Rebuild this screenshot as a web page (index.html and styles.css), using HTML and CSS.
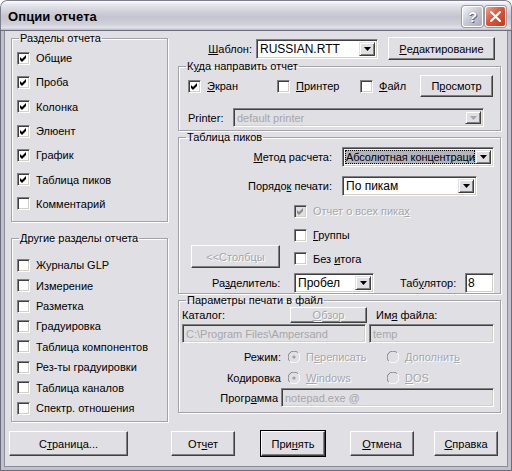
FILE: index.html
```html
<!DOCTYPE html>
<html>
<head>
<meta charset="utf-8">
<link rel="stylesheet" href="styles.css">
</head>
<body>
<div class="window">
  <div class="titlebar">
    <span class="title">Опции отчета</span>
    <div class="tb-btns">
      <span class="tb-btn help">?</span>
      <span class="tb-btn close"><svg width="11" height="11" viewBox="0 0 11 11"><path d="M1 1 L10 10 M10 1 L1 10" stroke="#fff" stroke-width="2.2" stroke-linecap="square"/></svg></span>
    </div>
  </div>
  <div class="client">
    <div class="cols">
      <div class="left">
        <fieldset class="grp g1">
          <legend>Разделы отчета</legend>
          <div class="gbody">
            <div class="crow"><span class="cb on"><svg viewBox="0 0 7 7"><path d="M0 2 L2 4 L6 0 L6 3 L2 7 L0 5 Z"/></svg></span><span>Общие</span></div>
            <div class="crow"><span class="cb on"><svg viewBox="0 0 7 7"><path d="M0 2 L2 4 L6 0 L6 3 L2 7 L0 5 Z"/></svg></span><span>Проба</span></div>
            <div class="crow"><span class="cb on"><svg viewBox="0 0 7 7"><path d="M0 2 L2 4 L6 0 L6 3 L2 7 L0 5 Z"/></svg></span><span>Колонка</span></div>
            <div class="crow"><span class="cb on"><svg viewBox="0 0 7 7"><path d="M0 2 L2 4 L6 0 L6 3 L2 7 L0 5 Z"/></svg></span><span>Элюент</span></div>
            <div class="crow"><span class="cb on"><svg viewBox="0 0 7 7"><path d="M0 2 L2 4 L6 0 L6 3 L2 7 L0 5 Z"/></svg></span><span>График</span></div>
            <div class="crow"><span class="cb on"><svg viewBox="0 0 7 7"><path d="M0 2 L2 4 L6 0 L6 3 L2 7 L0 5 Z"/></svg></span><span>Таблица пиков</span></div>
            <div class="crow"><span class="cb"></span><span>Комментарий</span></div>
          </div>
        </fieldset>
        <fieldset class="grp g2">
          <legend>Другие разделы отчета</legend>
          <div class="gbody">
            <div class="crow"><span class="cb"></span><span>Журналы GLP</span></div>
            <div class="crow"><span class="cb"></span><span>Измерение</span></div>
            <div class="crow"><span class="cb"></span><span>Разметка</span></div>
            <div class="crow"><span class="cb"></span><span>Градуировка</span></div>
            <div class="crow"><span class="cb"></span><span>Таблица компонентов</span></div>
            <div class="crow"><span class="cb"></span><span>Рез-ты градуировки</span></div>
            <div class="crow"><span class="cb"></span><span>Таблица каналов</span></div>
            <div class="crow"><span class="cb"></span><span>Спектр. отношения</span></div>
          </div>
        </fieldset>
      </div>
      <div class="right">
        <div class="tplrow">
          <span class="lbl"><u>Ш</u>аблон:</span>
          <div class="combo tpl"><span class="ctext">RUSSIAN.RTT</span><span class="dd"><svg viewBox="0 0 7 4"><path d="M0 0 H7 L3.5 4 Z"/></svg></span></div>
          <span class="btn edit"><u>Р</u>едактирование</span>
        </div>
        <fieldset class="grp dest">
          <legend>К<u>у</u>да направить отчет</legend>
          <div class="gbody">
            <div class="drow">
              <div class="opt o1"><span class="cb on"><svg viewBox="0 0 7 7"><path d="M0 2 L2 4 L6 0 L6 3 L2 7 L0 5 Z"/></svg></span><span><u>Э</u>кран</span></div>
              <div class="opt o2"><span class="cb"></span><span><u>П</u>ринтер</span></div>
              <div class="opt o3"><span class="cb"></span><span><u>Ф</u>айл</span></div>
              <span class="btn view">П<u>р</u>осмотр</span>
            </div>
            <div class="prrow">
              <span class="lbl">Printer:</span>
              <div class="combo dis printer"><span class="ctext">default printer</span><span class="dd"><svg viewBox="0 0 7 4"><path d="M0 0 H7 L3.5 4 Z"/></svg></span></div>
            </div>
          </div>
        </fieldset>
        <fieldset class="grp peaks">
          <legend>Таблица пиков</legend>
          <div class="gbody">
            <div class="pkrow r1">
              <span class="plbl"><u>М</u>етод расчета:</span>
              <div class="combo method"><span class="ctext"><span class="sel">Абсолютная концентраци</span></span><span class="dd"><svg viewBox="0 0 7 4"><path d="M0 0 H7 L3.5 4 Z"/></svg></span></div>
            </div>
            <div class="pkrow r2">
              <span class="plbl">Порядо<u>к</u> печати:</span>
              <div class="combo order"><span class="ctext">По пикам</span><span class="dd"><svg viewBox="0 0 7 4"><path d="M0 0 H7 L3.5 4 Z"/></svg></span></div>
            </div>
            <div class="pkchecks">
              <div class="opt c1"><span class="cb dis on"><svg viewBox="0 0 7 7"><path d="M0 2 L2 4 L6 0 L6 3 L2 7 L0 5 Z"/></svg></span><span class="distext">Отчет о всех пика<u>х</u></span></div>
              <div class="opt c2"><span class="cb"></span><span><u>Г</u>руппы</span></div>
              <span class="btn cols-btn distext">&lt;&lt;Столбцы</span>
              <div class="opt c3"><span class="cb"></span><span>Без <u>и</u>тога</span></div>
            </div>
            <div class="pkrow r6">
              <span class="seplbl">Ра<u>з</u>делитель:</span>
              <div class="combo sep"><span class="ctext">Пробел</span><span class="dd"><svg viewBox="0 0 7 4"><path d="M0 0 H7 L3.5 4 Z"/></svg></span></div>
              <span class="tablbl">Таб<u>у</u>лятор:</span>
              <div class="edit tab">8</div>
            </div>
          </div>
        </fieldset>
        <fieldset class="grp fileprm">
          <legend>Параметры печати в файл</legend>
          <div class="gbody">
            <div class="fr1">
              <span class="catlbl">Каталог:</span>
              <span class="btn browse distext"><u>О</u>бзор</span>
              <span class="namelbl">Им<u>я</u> файла:</span>
            </div>
            <div class="fr2">
              <div class="edit dis path">C:\Program Files\Ampersand</div>
              <div class="edit dis fname">temp</div>
            </div>
            <div class="fr3">
              <span class="rlbl">Режим:</span>
              <div class="ropt"><span class="rb on"><svg viewBox="0 0 12 12"><path d="M10.2 1.8 A5.6 5.6 0 0 0 1.8 10.2" fill="none" stroke="#808080"/><path d="M1.8 10.2 A5.6 5.6 0 0 0 10.2 1.8" fill="none" stroke="#fff"/><circle cx="6" cy="6" r="4.6" fill="#e0dfe3"/><circle cx="6" cy="6" r="1.6" fill="#a0a0a0"/></svg></span><span class="distext">П<u>е</u>реписать</span></div>
              <div class="ropt"><span class="rb"><svg viewBox="0 0 12 12"><path d="M10.2 1.8 A5.6 5.6 0 0 0 1.8 10.2" fill="none" stroke="#808080"/><path d="M1.8 10.2 A5.6 5.6 0 0 0 10.2 1.8" fill="none" stroke="#fff"/><circle cx="6" cy="6" r="4.6" fill="#e0dfe3"/></svg></span><span class="distext">Дополнит<u>ь</u></span></div>
            </div>
            <div class="fr3 fr4">
              <span class="rlbl">Кодировка</span>
              <div class="ropt"><span class="rb on"><svg viewBox="0 0 12 12"><path d="M10.2 1.8 A5.6 5.6 0 0 0 1.8 10.2" fill="none" stroke="#808080"/><path d="M1.8 10.2 A5.6 5.6 0 0 0 10.2 1.8" fill="none" stroke="#fff"/><circle cx="6" cy="6" r="4.6" fill="#e0dfe3"/><circle cx="6" cy="6" r="1.6" fill="#a0a0a0"/></svg></span><span class="distext"><u>W</u>indows</span></div>
              <div class="ropt"><span class="rb"><svg viewBox="0 0 12 12"><path d="M10.2 1.8 A5.6 5.6 0 0 0 1.8 10.2" fill="none" stroke="#808080"/><path d="M1.8 10.2 A5.6 5.6 0 0 0 10.2 1.8" fill="none" stroke="#fff"/><circle cx="6" cy="6" r="4.6" fill="#e0dfe3"/></svg></span><span class="distext"><u>D</u>OS</span></div>
            </div>
            <div class="fr5">
              <span class="proglbl">Прогр<u>а</u>мма</span>
              <div class="edit dis prog">notepad.exe @</div>
            </div>
          </div>
        </fieldset>
      </div>
    </div>
    <div class="btnrow">
      <span class="btn b-page">С<u>т</u>раница...</span>
      <span class="btn b-rep">От<u>ч</u>ет</span>
      <span class="btn b-ok def">При<u>н</u>ять</span>
      <span class="btn b-cancel"><u>О</u>тмена</span>
      <span class="btn b-help"><u>С</u>правка</span>
    </div>
  </div>
</div>
</body>
</html>
```
FILE: styles.css
```css
html, body {
  margin: 0;
  padding: 0;
  width: 512px;
  height: 471px;
  overflow: hidden;
  background: #fff;
}
body {
  font-family: "Liberation Sans", Arial, sans-serif;
  font-size: 11px;
  color: #000;
}
u { text-decoration: underline; text-underline-offset: 1px; }

.window {
  width: 512px;
  height: 471px;
  display: flex;
  flex-direction: column;
  box-sizing: border-box;
  border-radius: 7px 7px 0 0;
  overflow: hidden;
  background: #e0dfe3;
}
.titlebar {
  height: 30px;
  flex: none;
  display: flex;
  align-items: center;
  justify-content: space-between;
  padding: 0 5px 0 7px;
  background: linear-gradient(#ffffff 0%, #e6e6ee 12%, #d2d2dc 35%, #c4c4d0 55%, #cfd0da 80%, #e2e2ea 92%, #b9b9c6 100%);
  border: 1px solid #7e7e8c;
  border-bottom: none;
  border-radius: 7px 7px 0 0;
  box-sizing: border-box;
}
.title {
  font-weight: bold;
  font-size: 13px;
  color: #000;
  letter-spacing: 0.1px;
  margin-top: 1px;
}
.tb-btns { display: flex; gap: 2px; margin-top: 1px; }
.tb-btn {
  width: 21px;
  height: 21px;
  box-sizing: border-box;
  border-radius: 3px;
  border: 1px solid #fff;
  display: flex;
  align-items: center;
  justify-content: center;
  box-shadow: 0 0 0 1px #9a9aa8;
}
.help {
  background: linear-gradient(135deg, #f4f4f8, #c6c7d6 50%, #a7a9bd);
  color: #fff;
  font-weight: bold;
  font-size: 15px;
  text-shadow: 0 0 1px #55566a, 1px 1px 0 #6b6c80;
}
.close {
  background: linear-gradient(135deg, #f2a38f, #e0553a 45%, #c43a1c);
}
.close svg { width: 11px; height: 11px; display: block; }

.client {
  flex: 1;
  display: flex;
  flex-direction: column;
  border-style: solid;
  border-width: 0 4px 4px 4px;
  border-color: #bfc0cc;
  box-shadow: inset 1px 0 #8c8c9c, inset -1px 0 #8c8c9c, inset 0 -1px #8c8c9c;
  outline: 1px solid #6c6c7a;
  outline-offset: -1px;
  padding: 2px 0 0 5px;
}
.cols {
  display: flex;
  gap: 10px;
  margin-left: 2px;
}
.left {
  width: 157px;
  display: flex;
  flex-direction: column;
  gap: 10px;
}
.right {
  width: 323px;
  display: flex;
  flex-direction: column;
}

fieldset.grp {
  margin: 0;
  padding: 0;
  min-width: 0;
  border: 1px solid #a2a2a8;
  box-shadow: 1px 1px 0 #fff, inset 1px 1px 0 #fff;
}
fieldset.grp legend {
  padding: 0 1px;
  margin-left: 7px;
  line-height: 13px;
}
.gbody { display: flex; flex-direction: column; }

.g1 .gbody { padding: 1px 0 5px 5px; }
.g1 .crow { height: 24.3px; }
.g2 .gbody { padding: 10px 0 3px 5px; }
.g2 .crow { height: 20.4px; }
.crow {
  display: flex;
  align-items: center;
  gap: 6px;
}

.cb {
  width: 13px;
  height: 13px;
  box-sizing: border-box;
  flex: none;
  background: #fff;
  border: 1px solid;
  border-color: #808080 #fff #fff #808080;
  box-shadow: inset 1px 1px #404040, inset -1px -1px #d4d0c8;
  display: inline-block;
}
.cb svg { display: block; width: 7px; height: 7px; margin: 2px; fill: #000; }
.cb.dis { background: #e0dfe3; }
.cb.dis svg { fill: #8a8a8a; }

.distext { color: #a7a6aa; text-shadow: 1px 1px 0 #fff; }

.btn {
  box-sizing: border-box;
  display: flex;
  align-items: center;
  justify-content: center;
  background: #e0dfe3;
  border: 1px solid;
  border-color: #fff #404040 #404040 #fff;
  box-shadow: inset -1px -1px #808080;
  flex: none;
  white-space: nowrap;
}
.btn.def { outline: 1px solid #000; }

.combo, .edit {
  box-sizing: border-box;
  background: #fff;
  border: 1px solid;
  border-color: #808080 #fff #fff #808080;
  box-shadow: inset 1px 1px #404040, inset -1px -1px #d4d0c8;
  flex: none;
}
.combo {
  display: flex;
  align-items: stretch;
  padding: 2px;
}
.ctext {
  flex: 1;
  display: flex;
  align-items: center;
  padding-left: 1px;
  overflow: hidden;
  white-space: nowrap;
}
.dd {
  width: 16px;
  flex: none;
  box-sizing: border-box;
  background: #e0dfe3;
  border: 1px solid;
  border-color: #e0dfe3 #404040 #404040 #e0dfe3;
  box-shadow: inset 1px 1px #fff, inset -1px -1px #808080;
  display: flex;
  align-items: center;
  justify-content: center;
}
.dd svg { width: 7px; height: 4px; display: block; fill: #000; }
.combo.dis, .edit.dis { background: #e0dfe3; color: #a7a6aa; }
.combo.dis .dd svg { fill: #a7a6aa; }
.edit {
  display: flex;
  align-items: center;
  padding: 0 3px;
  white-space: nowrap;
  overflow: hidden;
}

/* template row */
.tplrow {
  margin-top: 5px;
  height: 23px;
  display: flex;
  align-items: center;
  justify-content: flex-end;
  padding-right: 6px;
}
.tplrow .lbl { margin-right: 4px; }
.combo.tpl { width: 122px; height: 20px; font-size: 12px; }
.btn.edit { width: 107px; height: 23px; margin-left: 10px; border-color: #fff #404040 #404040 #fff; background: #e0dfe3; box-shadow: inset -1px -1px #808080; padding: 0; }

/* dest */
.dest .gbody { padding: 2px 7px 3px 9px; }
.drow { display: flex; align-items: center; height: 22px; }
.opt { display: flex; align-items: center; gap: 6px; }
.dest .o1 { width: 89px; }
.dest .o2 { width: 83px; }
.dest .o3 { width: 60px; }
.btn.view { width: 73px; height: 22px; }
.prrow { display: flex; align-items: center; margin-top: 11px; }
.prrow .lbl { width: 54px; padding-left: 9px; box-sizing: border-box; margin-left: -9px; }
.combo.printer { width: 251px; height: 19px; margin-left: 0; }

/* peaks */
.peaks { margin-top: 2px; }
.peaks .gbody { padding: 3px 0 0 4px; }
.pkrow { display: flex; align-items: center; }
.plbl { width: 149px; text-align: right; margin-right: 10px; }
.combo.method { width: 152px; height: 20px; font-size: 11px; }
.combo.method .ctext { padding: 0; }
.sel {
  background: #b2b4bf;
  outline: 1px dotted #000;
  outline-offset: -1px;
  display: flex;
  align-items: center;
  height: 100%;
  padding-left: 1px;
  width: 100%;
  overflow: hidden;
  letter-spacing: -0.1px;
}
.pkrow.r2 { margin-top: 9px; }
.combo.order { width: 135px; height: 20px; font-size: 12px; }
.pkchecks {
  display: grid;
  grid-template-columns: 111px 1fr;
  grid-template-rows: 24px 24px 23px;
  margin-top: 3px;
}
.pkchecks .c1 { grid-column: 2; grid-row: 1; }
.pkchecks .c2 { grid-column: 2; grid-row: 2; }
.pkchecks .c3 { grid-column: 2; grid-row: 3; }
.btn.cols-btn {
  grid-column: 1;
  grid-row: 2 / 4;
  align-self: end;
  justify-self: start;
  margin-left: 8px;
  margin-bottom: 2px;
  width: 89px;
  height: 23px;
}
.pkrow.r6 { margin-top: 3px; height: 20px; }
.seplbl { width: 111px; padding-left: 29px; box-sizing: border-box; }
.combo.sep { width: 80px; height: 20px; font-size: 12px; }
.tablbl { margin-left: 26px; width: 65px; }
.edit.tab { width: 29px; height: 20px; font-size: 12px; padding-left: 2px; }

/* file params */
.fileprm { margin-top: 7px; }
.fileprm .gbody { padding: 0 0 5px 3px; }
.fr1 { display: flex; align-items: center; height: 16px; }
.catlbl { width: 108px; }
.btn.browse { width: 77px; height: 16px; }
.namelbl { margin-left: 9px; }
.fr2 { display: flex; gap: 3px; margin-top: 1px; }
.edit.path { width: 184px; height: 19px; }
.edit.fname { width: 125px; height: 19px; }
.fr3 { display: flex; align-items: center; height: 21px; margin-top: 3px; }
.fr4 { margin-top: 0; }
.rlbl { width: 99px; text-align: right; margin-right: 7px; }
.ropt { display: flex; align-items: center; gap: 6px; width: 99px; }
.rb { width: 12px; height: 12px; flex: none; }
.rb svg { display: block; width: 12px; height: 12px; }
.fr5 { display: flex; align-items: center; margin-top: 0; }
.proglbl { width: 96px; text-align: right; margin-right: 3px; }
.edit.prog { width: 213px; height: 19px; }

/* bottom buttons */
.btnrow {
  display: flex;
  margin-top: 9px;
  height: 25px;
  align-items: stretch;
}
.btnrow .btn { height: 25px; width: 64px; }
.b-page { width: 119px !important; margin-left: 0; }
.b-rep { margin-left: 43px; }
.b-ok { margin-left: 26px; }
.b-cancel { margin-left: 25px; }
.b-help { margin-left: 20px; }
```
